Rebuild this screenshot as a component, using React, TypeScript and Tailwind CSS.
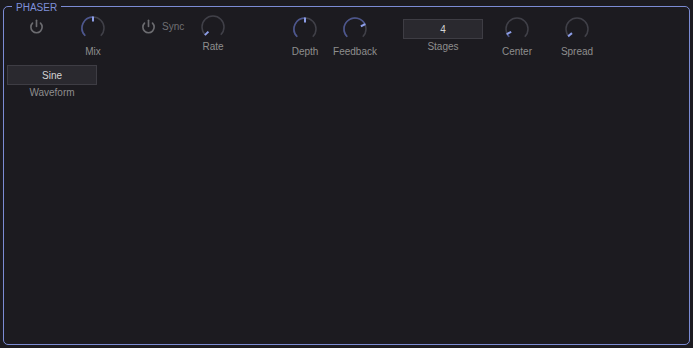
import { Power } from "lucide-react";

type KnobProps = {
  value: number; // 0..1
};

const START = -135;
const SWEEP = 270;

function polar(r: number, deg: number) {
  const rad = (deg * Math.PI) / 180;
  return { x: 13 + r * Math.sin(rad), y: 13 - r * Math.cos(rad) };
}

function arc(r: number, from: number, to: number) {
  const a = polar(r, from);
  const b = polar(r, to);
  const large = to - from > 180 ? 1 : 0;
  return `M ${a.x.toFixed(2)} ${a.y.toFixed(2)} A ${r} ${r} 0 ${large} 1 ${b.x.toFixed(2)} ${b.y.toFixed(2)}`;
}

function Knob({ value }: KnobProps) {
  const angle = START + SWEEP * value;
  const t1 = polar(6.5, angle);
  const t2 = polar(11.5, angle);
  return (
    <svg width="26" height="26" viewBox="0 0 26 26" className="block">
      <path d={arc(11, START, START + SWEEP)} fill="none" stroke="#404048" strokeWidth="1.5" />
      {value > 0.01 ? (
        <path d={arc(11, START, angle)} fill="none" stroke="#4c5690" strokeWidth="1.5" />
      ) : null}
      <line x1={t1.x} y1={t1.y} x2={t2.x} y2={t2.y} stroke="#8d9ee8" strokeWidth="2" />
    </svg>
  );
}

function KnobControl({
  label,
  value,
  className,
  knobTop,
  labelTop,
}: {
  label: string;
  value: number;
  className: string;
  knobTop: string;
  labelTop: string;
}) {
  return (
    <div className={`flex flex-col items-center ${className}`}>
      <div className={knobTop}>
        <Knob value={value} />
      </div>
      <span className={`${labelTop} text-[10px] leading-[12px] text-[#8e8e8e] whitespace-nowrap`}>{label}</span>
    </div>
  );
}

function PowerIcon() {
  return <Power size={15} strokeWidth={2.6} className="text-[#6c6c70]" />;
}

export default function App() {
  return (
    <div className="w-[693px] h-[348px] bg-[#1c1b20] px-[3px] pb-[3px] font-['Liberation_Sans',Arial,sans-serif]">
      <fieldset className="h-full rounded-[5px] border border-[#7b8bd4]">
        <legend className="ml-[8px] px-[4px] text-[10px] leading-[12px] text-[#7f90da]">
          <span className="relative top-[2px]">PHASER</span>
        </legend>

        <div className="flex items-start">
          <div className="ml-[25px] mt-[7px]">
            <PowerIcon />
          </div>

          <KnobControl label="Mix" value={0.5} className="ml-[29px] w-[40px]" knobTop="mt-[3px]" labelTop="mt-[5px]" />

          <div className="ml-[28px] mt-[7px] flex h-[15px] w-[52px] items-center">
            <PowerIcon />
            <span className="ml-[6px] text-[10px] leading-[12px] text-[#707074]">Sync</span>
          </div>

          <KnobControl label="Rate" value={0} className="w-[40px]" knobTop="mt-[2px]" labelTop="mt-[1px]" />

          <KnobControl label="Depth" value={0.5} className="ml-[52px] w-[40px]" knobTop="mt-[4px]" labelTop="mt-[4px]" />

          <KnobControl label="Feedback" value={0.74} className="ml-[5px] w-[50px]" knobTop="mt-[4px]" labelTop="mt-[4px]" />

          <div className="ml-[23px] flex w-[80px] flex-col items-center">
            <div className="mt-[7px] flex h-[20px] w-[80px] items-center justify-center border border-[#3e3d44] bg-[#2a292f] text-[10px] text-[#d4d4d4]">
              4
            </div>
            <span className="mt-[2px] text-[10px] leading-[12px] text-[#8e8e8e]">Stages</span>
          </div>

          <KnobControl label="Center" value={0.07} className="ml-[14px] w-[40px]" knobTop="mt-[4px]" labelTop="mt-[4px]" />

          <KnobControl label="Spread" value={0.02} className="ml-[20px] w-[40px]" knobTop="mt-[4px]" labelTop="mt-[4px]" />
        </div>

        <div className="ml-[3px] mt-[7px] flex w-[90px] flex-col items-center">
          <div className="flex h-[20px] w-[90px] items-center justify-center border border-[#3e3d44] bg-[#2a292f] text-[10px] text-[#d4d4d4]">
            Sine
          </div>
          <span className="mt-[2px] text-[10px] leading-[12px] text-[#8e8e8e]">Waveform</span>
        </div>
      </fieldset>
    </div>
  );
}
